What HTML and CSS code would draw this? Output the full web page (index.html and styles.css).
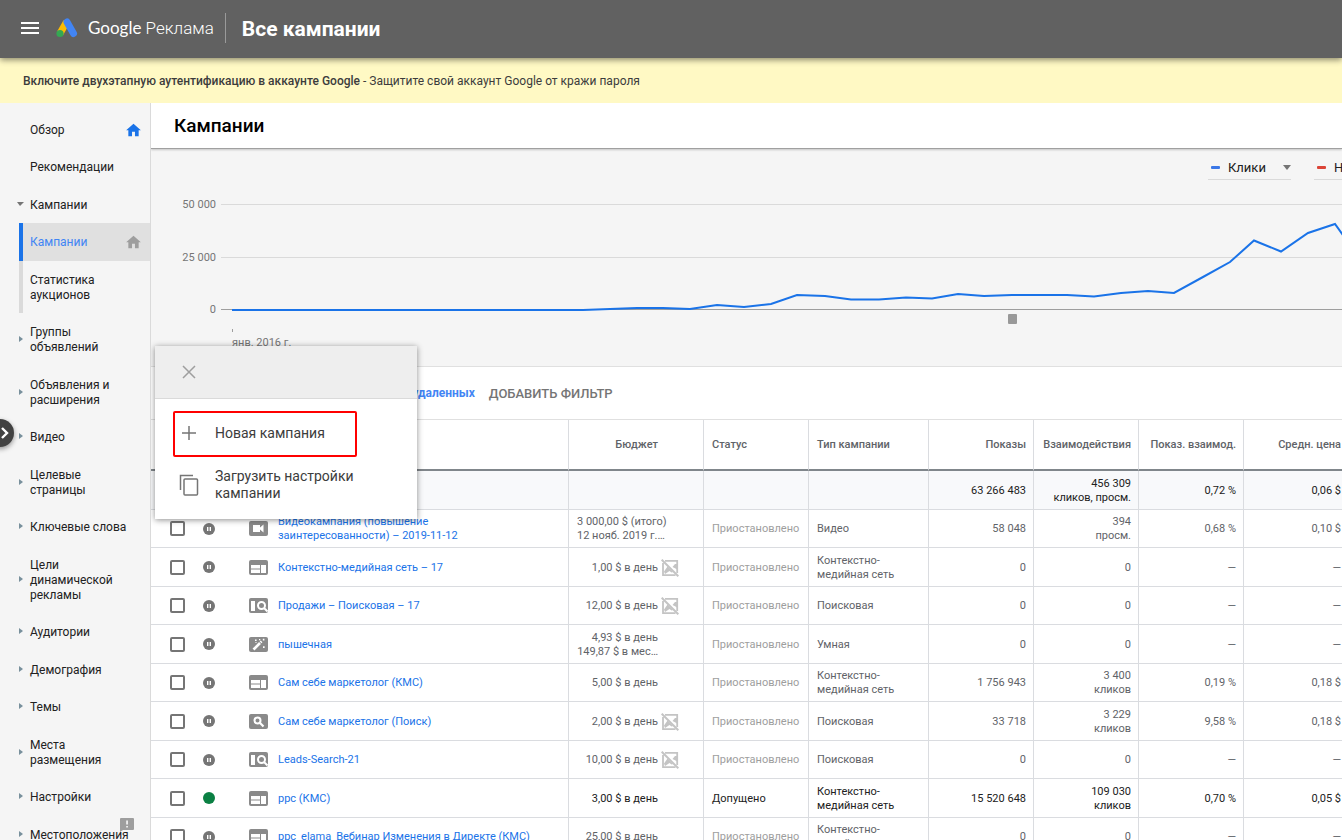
FILE: index.html
```html
<!DOCTYPE html>
<html lang="ru">
<head>
<meta charset="utf-8">
<title>Все кампании – Google Реклама</title>
<link rel="stylesheet" href="styles.css">
</head>
<body>
<svg class="sprite" aria-hidden="true">
  <symbol id="i-home" viewBox="2 2 20 19"><path d="M10 20v-6h4v6h5v-8h3L12 3 2 12h3v8z"/></symbol>
  <symbol id="i-pause" viewBox="0 0 12 12"><circle cx="6" cy="6" r="6" fill="#757575"/><path d="M4 4h1.400v4H4zM6.600 4H8v4H6.600z" fill="#fff"/></symbol>
  <symbol id="i-on" viewBox="0 0 12 12"><circle cx="6" cy="6" r="6" fill="#0b8043"/></symbol>
  <symbol id="i-video" viewBox="0 0 19 15"><rect width="19" height="15" rx="2" fill="#8a8a8a"/><path d="M4 4h7v2.500L14.500 3.500v8L11 8.500V11H4z" fill="#fff"/></symbol>
  <symbol id="i-display" viewBox="0 0 19 15"><rect width="19" height="15" rx="2" fill="#8a8a8a"/><path d="M2 5h9v3.500H2zM2 9.500h9V13H2zM12 5h5v8h-5z" fill="#fff"/></symbol>
  <symbol id="i-searchdisplay" viewBox="0 0 19 15"><rect width="19" height="15" rx="2" fill="#8a8a8a"/><path d="M2 3h4v10H2z" fill="#fff"/><circle cx="12.500" cy="7.500" r="3.500" fill="none" stroke="#fff" stroke-width="2"/><path d="M15 10l3.500 3.500" stroke="#fff" stroke-width="2"/></symbol>
  <symbol id="i-search" viewBox="0 0 19 15"><rect width="19" height="15" rx="2" fill="#8a8a8a"/><circle cx="8.500" cy="6.500" r="3" fill="none" stroke="#fff" stroke-width="2"/><path d="M10.800 8.800l3.700 3.700" stroke="#fff" stroke-width="2.200"/></symbol>
  <symbol id="i-smart" viewBox="0 0 19 15"><rect width="19" height="15" rx="2" fill="#8a8a8a"/><path d="M4.500 12.500L11 6" stroke="#fff" stroke-width="2.600"/><path d="M11.600 5.400l1-1" stroke="#fff" stroke-width="2.400"/><path d="M6 2.500h1.600v1.600H6zM10 2h1.300v1.300H10zM13.800 1.800h1.600v1.600h-1.600zM14 9.300h1.600v1.600H14zM6.500 5h1v1h-1z" fill="#fff"/></symbol>
  <symbol id="i-limited" viewBox="0 0 18 18"><path d="M4 1.800h12.200V14M2 4v12.200h12.500" fill="none" stroke="#c4c4c4" stroke-width="1.800"/><path d="M3 12.500l3.500-5 5.500 5.500-1.500.5-2-1.500L4 15zM11.500 8L14 5h2.500v6l-2-1.500z" fill="#c4c4c4"/><path d="M.7.7l16.600 16.600" stroke="#c4c4c4" stroke-width="2"/></symbol>
</svg>

<header class="topbar">
  <button class="menu-btn" aria-label="Меню"><svg width="20" height="14" viewBox="0 0 20 14"><path d="M1 2h18M1 7h18M1 12h18" stroke="#fff" stroke-width="2"/></svg></button>
  <svg class="logo" width="22" height="20" viewBox="0 0 22 20"><path d="M10.500 4L4 15.500" stroke="#fbbc04" stroke-width="7"/><path d="M11 4l6.500 11.500" stroke="#4285f4" stroke-width="7" stroke-linecap="round"/><circle cx="4" cy="15.500" r="3.600" fill="#34a853"/></svg>
  <span class="brand"><span class="brand-g">Google</span> <span class="brand-p">Реклама</span></span>
  <h1 class="scope">Все кампании</h1>
</header>

<div class="banner"><strong>Включите двухэтапную аутентификацию в аккаунте Google</strong> - Защитите свой аккаунт Google от кражи пароля</div>

<div class="layout">
  <nav class="sidebar">
    <ul class="nav">
      <li><a href="#">Обзор</a><svg class="home home-blue"><use href="#i-home"/></svg></li>
      <li><a href="#">Рекомендации</a></li>
      <li class="open"><a href="#">Кампании</a></li>
      <li class="sub active"><a href="#">Кампании</a><svg class="home"><use href="#i-home"/></svg></li>
      <li class="sub"><a href="#">Статистика<br>аукционов</a></li>
      <li class="group"><a href="#">Группы<br>объявлений</a></li>
      <li class="group"><a href="#">Объявления и<br>расширения</a></li>
      <li class="group"><a href="#">Видео</a></li>
      <li class="group"><a href="#">Целевые<br>страницы</a></li>
      <li class="group"><a href="#">Ключевые слова</a></li>
      <li class="group"><a href="#">Цели<br>динамической<br>рекламы</a></li>
      <li class="group"><a href="#">Аудитории</a></li>
      <li class="group"><a href="#">Демография</a></li>
      <li class="group"><a href="#">Темы</a></li>
      <li class="group"><a href="#">Места<br>размещения</a></li>
      <li class="group"><a href="#">Настройки</a></li>
      <li class="group"><a href="#">Местоположения</a></li>
    </ul>
    <button class="feedback" aria-label="Отзыв"><svg width="14" height="14" viewBox="0 0 14 14"><path d="M1 0h12q1 0 1 1v10q0 1-1 1H3l-3 2V1q0-1 1-1z" fill="#9e9e9e"/><path d="M6.300 2.500h1.500v4H6.300zM6.300 8h1.500v1.500H6.300z" fill="#fff"/></svg></button>
  </nav>

  <main class="main">
    <h2 class="page-title">Кампании</h2>

    <section class="chart">
      <div class="legend">
        <label class="metric"><span class="dash dash-blue"></span><select aria-label="Показатель 1"><option>Клики</option></select></label>
        <label class="metric metric-cut"><span class="dash dash-red"></span><select aria-label="Показатель 2"><option>Н</option></select></label>
      </div>
      <svg class="plot" width="100%" height="166">
        <g stroke="#dadada"><path d="M70 4.500h3000M70 57.500h3000"/></g>
        <path d="M70 109.500h3000" stroke="#9e9e9e"/>
        <path d="M81.500 129v3" stroke="#9e9e9e"/>
        <g class="axis"><text x="65" y="8" text-anchor="end">50 000</text><text x="65" y="61" text-anchor="end">25 000</text><text x="65" y="113" text-anchor="end">0</text><text x="81" y="146">янв. 2016 г.</text></g>
        <polyline fill="none" stroke="#1a73e8" stroke-width="2" points="81,110 432,110 459,109 486,108 512,108 539,109 566,105 593,107 620,104 646,95 674,96 700,99.500 728,99.500 755,97.500 781,98.500 807,94 833,96 861,95 916,95 943,96.500 970,93 997,91 1023,93 1052,77 1079,62 1103,40.500 1130,51.500 1157,33 1184,24 1194,38"/>
        <rect x="857" y="114" width="9" height="10" rx="1" fill="#999"/>
      </svg>
    </section>

    <div class="filters"><a class="filter-state" href="#">Все, кроме удаленных</a><button class="add-filter">ДОБАВИТЬ ФИЛЬТР</button></div>

    <div class="table-wrap">
    <table class="grid">
      <colgroup><col class="c-check"><col class="c-dot"><col class="c-icon"><col class="c-name"><col class="c-budget"><col class="c-num"><col class="c-type"><col class="c-num"><col class="c-num"><col class="c-num"><col class="c-num"></colgroup>
      <thead>
        <tr><th colspan="4"></th><th class="budget">Бюджет</th><th>Статус</th><th>Тип кампании</th><th class="num">Показы</th><th class="num">Взаимодействия</th><th class="num">Показ. взаимод.</th><th class="num">Средн. цена</th></tr>
      </thead>
      <tbody class="total">
        <tr><td colspan="4"></td><td></td><td></td><td></td><td class="num">63 266 483</td><td class="num">456 309<br>кликов, просм.</td><td class="num">0,72 %</td><td class="num">0,06 $</td></tr>
      </tbody>
      <tbody class="rows">
        <tr><td><input type="checkbox" aria-label="Видеокампания"></td><td><svg class="dot"><use href="#i-pause"/></svg></td><td><svg class="kind"><use href="#i-video"/></svg></td><td class="name"><a href="#">Видеокампания (повышение<br>заинтересованности) – 2019-11-12</a></td><td class="budget budget-total">3 000,00 $ (итого)<br>12 нояб. 2019 г.…</td><td class="state">Приостановлено</td><td>Видео</td><td class="num">58 048</td><td class="num">394<br>просм.</td><td class="num">0,68 %</td><td class="num">0,10 $</td></tr>
        <tr><td><input type="checkbox" aria-label="Контекстно-медийная сеть – 17"></td><td><svg class="dot"><use href="#i-pause"/></svg></td><td><svg class="kind"><use href="#i-display"/></svg></td><td class="name"><a href="#">Контекстно-медийная сеть – 17</a></td><td class="budget">1,00 $ в день<svg class="limited"><use href="#i-limited"/></svg></td><td class="state">Приостановлено</td><td>Контекстно-<br>медийная сеть</td><td class="num">0</td><td class="num">0</td><td class="num">—</td><td class="num">—</td></tr>
        <tr><td><input type="checkbox" aria-label="Продажи – Поисковая – 17"></td><td><svg class="dot"><use href="#i-pause"/></svg></td><td><svg class="kind"><use href="#i-searchdisplay"/></svg></td><td class="name"><a href="#">Продажи – Поисковая – 17</a></td><td class="budget">12,00 $ в день<svg class="limited"><use href="#i-limited"/></svg></td><td class="state">Приостановлено</td><td>Поисковая</td><td class="num">0</td><td class="num">0</td><td class="num">—</td><td class="num">—</td></tr>
        <tr><td><input type="checkbox" aria-label="пышечная"></td><td><svg class="dot"><use href="#i-pause"/></svg></td><td><svg class="kind"><use href="#i-smart"/></svg></td><td class="name"><a href="#">пышечная</a></td><td class="budget">4,93 $ в день<br>149,87 $ в мес…</td><td class="state">Приостановлено</td><td>Умная</td><td class="num">0</td><td class="num">0</td><td class="num">—</td><td class="num">—</td></tr>
        <tr><td><input type="checkbox" aria-label="Сам себе маркетолог (КМС)"></td><td><svg class="dot"><use href="#i-pause"/></svg></td><td><svg class="kind"><use href="#i-display"/></svg></td><td class="name"><a href="#">Сам себе маркетолог (КМС)</a></td><td class="budget">5,00 $ в день</td><td class="state">Приостановлено</td><td>Контекстно-<br>медийная сеть</td><td class="num">1 756 943</td><td class="num">3 400<br>кликов</td><td class="num">0,19 %</td><td class="num">0,18 $</td></tr>
        <tr><td><input type="checkbox" aria-label="Сам себе маркетолог (Поиск)"></td><td><svg class="dot"><use href="#i-pause"/></svg></td><td><svg class="kind"><use href="#i-search"/></svg></td><td class="name"><a href="#">Сам себе маркетолог (Поиск)</a></td><td class="budget">2,00 $ в день<svg class="limited"><use href="#i-limited"/></svg></td><td class="state">Приостановлено</td><td>Поисковая</td><td class="num">33 718</td><td class="num">3 229<br>кликов</td><td class="num">9,58 %</td><td class="num">0,18 $</td></tr>
        <tr><td><input type="checkbox" aria-label="Leads-Search-21"></td><td><svg class="dot"><use href="#i-pause"/></svg></td><td><svg class="kind"><use href="#i-searchdisplay"/></svg></td><td class="name"><a href="#">Leads-Search-21</a></td><td class="budget">10,00 $ в день<svg class="limited"><use href="#i-limited"/></svg></td><td class="state">Приостановлено</td><td>Поисковая</td><td class="num">0</td><td class="num">0</td><td class="num">—</td><td class="num">—</td></tr>
        <tr class="enabled"><td><input type="checkbox" aria-label="ppc (КМС)"></td><td><svg class="dot"><use href="#i-on"/></svg></td><td><svg class="kind"><use href="#i-display"/></svg></td><td class="name"><a href="#">ppc (КМС)</a></td><td class="budget">3,00 $ в день</td><td class="state">Допущено</td><td>Контекстно-<br>медийная сеть</td><td class="num">15 520 648</td><td class="num">109 030<br>кликов</td><td class="num">0,70 %</td><td class="num">0,05 $</td></tr>
        <tr><td><input type="checkbox" aria-label="ppc_elama"></td><td><svg class="dot"><use href="#i-pause"/></svg></td><td><svg class="kind"><use href="#i-display"/></svg></td><td class="name"><a href="#">ppc_elama_Вебинар Изменения в Директе (КМС)</a></td><td class="budget">25,00 $ в день</td><td class="state">Приостановлено</td><td>Контекстно-<br>медийная сеть</td><td class="num">0</td><td class="num">0</td><td class="num">—</td><td class="num">—</td></tr>
      </tbody>
    </table>
    </div>

    <div class="popup" role="menu">
      <div class="popup-head"><button aria-label="Закрыть"><svg width="14" height="14" viewBox="0 0 14 14"><path d="M1 1l12 12M13 1L1 13" stroke="#9e9e9e" stroke-width="1.500"/></svg></button></div>
      <div class="popup-body">
        <button class="popup-item marked" role="menuitem"><svg width="14" height="14" viewBox="0 0 14 14"><path d="M7 0v14M0 7h14" stroke="#757575" stroke-width="1.500"/></svg><span>Новая кампания</span></button>
        <button class="popup-item" role="menuitem"><svg width="20" height="22" viewBox="0 0 20 22"><path d="M1.500 16V1.500H14" fill="none" stroke="#757575" stroke-width="1.500"/><rect x="5" y="5" width="13.500" height="16" rx="1" fill="none" stroke="#757575" stroke-width="1.500"/></svg><span>Загрузить настройки<br>кампании</span></button>
      </div>
    </div>
  </main>
  <button class="expander" aria-label="Развернуть"><svg width="8" height="12" viewBox="0 0 8 12"><path d="M1 1l5 5-5 5" fill="none" stroke="#fff" stroke-width="2.400"/></svg></button>
</div>
</body>
</html>
```
FILE: styles.css
```css
* { box-sizing: border-box; }
body {
  margin: 0;
  height: 100vh;
  display: flex;
  flex-direction: column;
  overflow: hidden;
  background: #fff;
  font-family: Roboto, "Noto Sans", sans-serif;
  color: #212121;
}
button { border: 0; padding: 0; margin: 0; background: none; font: inherit; color: inherit; text-align: left; }
button svg { display: block; }
a { text-decoration: none; color: inherit; }
.sprite { position: absolute; width: 0; height: 0; }

.topbar {
  flex: none;
  height: 58px;
  display: flex;
  align-items: center;
  padding: 0 0 2px 20px;
  background: #616161;
  color: #fff;
  box-shadow: 0 2px 6px rgba(0, 0, 0, .45);
  position: relative;
  z-index: 3;
}
.logo { margin: 0 10px 0 16px; }
.brand { font-size: 17px; line-height: 24px; white-space: nowrap; }
.brand-g { font-family: Lato, Roboto, sans-serif; }
.brand-p { font-weight: 300; }
.scope {
  margin: 0 0 0 11px;
  padding: 2px 0 0 16px;
  border-left: 1px solid #9a9a9a;
  font-size: 21px;
  line-height: 28px;
  font-weight: 700;
}

.banner {
  flex: none;
  height: 45px;
  padding: 1px 23px 0;
  background: #fff9c4;
  font-size: 12px;
  line-height: 44px;
  color: #3c3c3c;
}
.banner strong { font-weight: 500; }

.layout { flex: 1; min-height: 0; display: flex; position: relative; }

.sidebar {
  flex: none;
  width: 151px;
  background: #f5f5f5;
  border-right: 1px solid #dadada;
  overflow: hidden;
  position: relative;
}
.nav { list-style: none; margin: 0; padding: 8px 0 0; font-size: 12px; line-height: 15px; }
.nav li {
  display: flex;
  align-items: center;
  margin-left: 19px;
  padding: 12px 9px 10px 11px;
}
.nav li:nth-child(even) { padding-bottom: 11px; }
.nav a { flex: 1; white-space: nowrap; }
.nav .sub { border-left: 4px solid #dadada; padding-left: 7px; }
.nav .active { border-left-color: #1a73e8; background: #e0e0e0; color: #4285f4; }
.nav .group, .nav .open { padding-left: 0; }
.nav .group::before {
  content: "";
  margin: 0 7px 3px 0;
  border: solid transparent;
  border-width: 3px 0 3px 4px;
  border-left-color: #78909c;
}
.nav .open { margin-left: 17px; }
.nav .open::before {
  content: "";
  margin: 0 6px 3px 0;
  border: solid transparent;
  border-width: 4px 4px 0 3px;
  border-top-color: #757575;
}
.home { width: 15px; height: 14px; margin: -2px 0 0; fill: #9e9e9e; }
.home-blue { fill: #1a73e8; }
.feedback { position: absolute; right: 16px; bottom: 8px; background: #f5f5f5; }

.expander {
  position: absolute;
  left: -14px;
  top: 316px;
  width: 28px;
  height: 28px;
  padding-left: 15px;
  border-radius: 50%;
  background: #424242;
  box-shadow: 0 2px 5px rgba(0, 0, 0, .4);
}

.main { flex: 1; min-width: 0; position: relative; overflow: hidden; }
.page-title {
  margin: 0;
  padding: 0 23px;
  font-size: 19px;
  line-height: 45px;
  font-weight: 500;
  color: #000;
  border-bottom: 1px solid #a0a0a0;
  box-shadow: 0 1px 2px rgba(0, 0, 0, .2);
  position: relative;
}

.chart { background: #f5f5f5; border-bottom: 1px solid #e0e0e0; padding-top: 6px; }
.legend { display: flex; justify-content: flex-end; gap: 23px; height: 45px; }
.metric {
  display: flex;
  align-items: center;
  gap: 8px;
  width: 83px;
  height: 25px;
  padding-left: 3px;
  border-bottom: 1px solid #dadada;
}
.metric::after {
  content: "";
  border: solid transparent;
  border-width: 5px 4px 0;
  border-top-color: #757575;
}
.metric-cut { width: 28px; overflow: hidden; }
.metric select { appearance: none; flex: 1; min-width: 40px; border: 0; padding: 1px 0 0; background: none; font: 13px/18px Roboto, sans-serif; color: #212121; }
.dash { flex: none; width: 9px; height: 3px; border-radius: 1px; background: #3b78e7; }
.dash-red { background: #db4437; }
.plot { display: block; }
.axis { font-size: 11px; fill: #757575; }

.filters { display: flex; align-items: center; gap: 14px; height: 52px; padding-left: 196px; font-size: 12px; white-space: nowrap; }
.filter-state { color: #4285f4; font-weight: 700; }
.add-filter { font-size: 13px; font-weight: 500; color: #757575; }

.table-wrap { overflow: hidden; }
.grid {
  table-layout: fixed;
  width: 1197px;
  border-spacing: 0;
  border-top: 1px solid #e0e0e0;
  font-size: 11px;
  line-height: 14px;
  color: #5f6368;
}
.c-check { width: 45px; }
.c-dot { width: 45px; }
.c-icon { width: 30px; }
.c-name { width: 298px; }
.c-budget { width: 135px; }
.c-type { width: 120px; }
.c-num { width: 105px; }
.grid th, .grid td {
  padding: 1px 7px 0 8px;
  text-align: left;
  vertical-align: middle;
  white-space: nowrap;
  border-right: 1px solid #dadce0;
  border-bottom: 1px solid #dadce0;
}
.grid th { height: 51px; font-weight: 500; border-bottom: 2px solid #80868b; }
.grid .num { text-align: right; }
.grid .budget { text-align: right; padding-right: 45px; }
.grid .budget-total { text-align: left; padding-right: 0; }
.total td { height: 39px; background: #f8f9fb; color: #212121; }
.rows td { height: 38px; }
.rows tr:nth-child(even) td { height: 39px; }
.rows td:nth-child(-n+3) { border-right: 0; padding: 0; }
.rows td:first-child { padding-left: 19px; }
.rows td:nth-child(2) { padding-left: 7px; }
.rows td:nth-child(3) { padding-left: 8px; }
.rows .name { padding-left: 7px; color: #1a73e8; }
.rows .state { color: #9e9e9e; }
.rows .enabled, .rows .enabled .state { color: #212121; }
.rows input { appearance: none; display: block; margin: 0; width: 15px; height: 15px; border: 2px solid #757575; border-radius: 2px; }
.dot { display: block; width: 12px; height: 12px; }
.kind { display: block; width: 19px; height: 15px; }
.limited { width: 18px; height: 18px; margin: -4px -21px -4px 3px; vertical-align: middle; }

.popup {
  position: absolute;
  left: 4px;
  top: 243px;
  width: 262px;
  background: #fff;
  box-shadow: 0 1px 6px rgba(0, 0, 0, .45);
}
.popup-head { height: 53px; padding: 18px 27px; background: #eee; border-bottom: 1px solid #dadada; }
.popup-body { padding: 12px 18px 6px; font-size: 14px; line-height: 17px; color: #3c3c3c; }
.popup-item { display: flex; align-items: center; width: 184px; height: 56px; padding-left: 6px; white-space: nowrap; gap: 16px; }
.popup-item.marked { height: 46px; border: 2px solid #f00; border-radius: 2px; padding: 0 0 2px 7px; gap: 19px; }
```
